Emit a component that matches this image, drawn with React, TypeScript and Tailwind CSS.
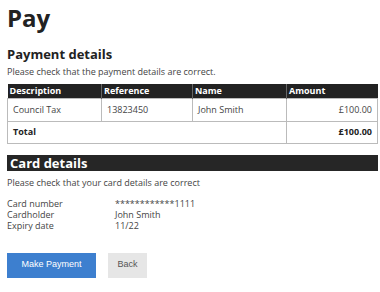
const rows = [
  { description: 'Council Tax', reference: '13823450', name: 'John Smith', amount: '£100.00' },
];

const card = [
  { label: 'Card number', value: '************1111' },
  { label: 'Cardholder', value: 'John Smith' },
  { label: 'Expiry date', value: '11/22' },
];

export default function App() {
  return (
    <div className="w-[380px] h-[292px] bg-white px-[7px] pt-[3px] text-[#444] font-['Open_Sans',sans-serif] text-[9px]">
      <h1 className="text-[24px] font-bold leading-[30px] text-[#222]">Pay</h1>

      <h2 className="mt-[12px] text-[13px] font-bold leading-[18px] text-[#222]">Payment details</h2>
      <p className="mt-[3px] leading-[12px]">Please check that the payment details are correct.</p>

      <table className="mt-[6px] w-[371px] border-collapse table-fixed">
        <colgroup>
          <col className="w-[94px]" />
          <col className="w-[91px]" />
          <col className="w-[94px]" />
          <col />
        </colgroup>
        <thead>
          <tr className="bg-[#222] text-white text-[9px]">
            <th className="h-[14px] text-left font-bold px-[2px] leading-[13px] border-r border-[#666]">Description</th>
            <th className="h-[14px] text-left font-bold px-[2px] leading-[13px] border-r border-[#666]">Reference</th>
            <th className="h-[14px] text-left font-bold px-[2px] leading-[13px] border-r border-[#666]">Name</th>
            <th className="h-[14px] text-left font-bold px-[2px] leading-[13px]">Amount</th>
          </tr>
        </thead>
        <tbody>
          {rows.map((r) => (
            <tr key={r.reference} className="h-[23px]">
              <td className="border border-[#bbb] px-[5px]">{r.description}</td>
              <td className="border border-[#bbb] px-[5px]">{r.reference}</td>
              <td className="border border-[#bbb] px-[5px]">{r.name}</td>
              <td className="border border-[#bbb] px-[5px] text-right">{r.amount}</td>
            </tr>
          ))}
          <tr className="h-[22px] text-[#222] font-bold">
            <td colSpan={3} className="border border-[#bbb] px-[5px]">Total</td>
            <td className="border border-[#bbb] px-[5px] text-right">£100.00</td>
          </tr>
        </tbody>
      </table>

      <div className="mt-[11px] w-[371px] h-[16px] bg-[#262626] px-[3px] text-white text-[13px] font-bold leading-[16px]">
        Card details
      </div>
      <p className="mt-[6px] leading-[12px]">Please check that your card details are correct</p>

      <div className="mt-[9px] flex flex-col">
        {card.map((c) => (
          <div key={c.label} className="flex leading-[11px]">
            <span className="w-[108px]">{c.label}</span>
            <span>{c.value}</span>
          </div>
        ))}
      </div>

      <div className="mt-[22px] flex gap-[12px] font-['Liberation_Sans',sans-serif] text-[9px]">
        <button className="w-[89px] h-[25px] bg-[#3d7fcf] text-white">Make Payment</button>
        <button className="w-[39px] h-[25px] bg-[#e6e6e6] text-[#555]">Back</button>
      </div>
    </div>
  );
}
